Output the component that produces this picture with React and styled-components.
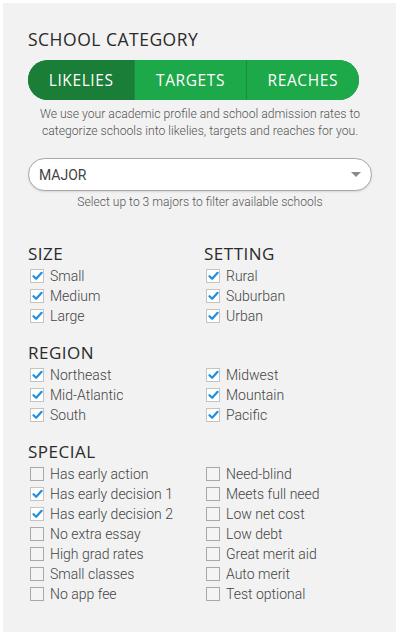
import React from "react";
import styled, { createGlobalStyle } from "styled-components";

const Global = createGlobalStyle`
  html, body { margin: 0; padding: 0; background: #fff; }
  body { font-family: Roboto, "Liberation Sans", sans-serif; }
`;

const Page = styled.div`
  padding: 3px 4px 4px 3px;
`;

const Panel = styled.div`
  width: 393px;
  height: 629px;
  box-sizing: border-box;
  background: #f2f2f2;
  padding: 25px 24px 0 25px;
`;

const Heading = styled.h2`
  margin: 0 0 ${(p) => p.$mb || 0}px;
  font-family: "Open Sans", "Liberation Sans", sans-serif;
  font-weight: 400;
  font-size: ${(p) => p.$size || 17}px;
  line-height: ${(p) => p.$lh || 20}px;
  letter-spacing: 0.5px;
  color: #2a2a2a;
  text-transform: uppercase;
  min-height: ${(p) => p.$lh || 20}px;
`;

const Segmented = styled.div`
  display: flex;
  width: 331px;
  height: 40px;
  border-radius: 20px;
  overflow: hidden;
  background: #1da84a;
`;

const Segment = styled.button`
  flex: ${(p) => p.$w} 0 0;
  border: none;
  margin: 0;
  padding: 0;
  background: ${(p) => (p.$active ? "#1a7d38" : "#1da84a")};
  border-left: ${(p) => (p.$first ? "none" : "1px solid #178f3e")};
  color: #fff;
  font-family: "Open Sans", "Liberation Sans", sans-serif;
  font-size: 15.5px;
  letter-spacing: 0.6px;
  text-transform: uppercase;
`;

const Description = styled.p`
  margin: 6px 0 0;
  text-align: center;
  font-size: 12.2px;
  font-weight: 300;
  line-height: 17px;
  color: #555;
  white-space: nowrap;
`;

const SelectBox = styled.div`
  margin: 18px 0 0;
  height: 33px;
  box-sizing: border-box;
  border: 1px solid #a9a9a9;
  border-radius: 17px;
  background: #fff;
  display: flex;
  align-items: center;
  justify-content: space-between;
  padding: 0 10px 0 10px;
  font-size: 14px;
  color: #444;
  box-shadow: 0 1px 2px rgba(0, 0, 0, 0.12);
`;

const Hint = styled.p`
  margin: 3px 0 0;
  text-align: center;
  font-size: 12.1px;
  font-weight: 300;
  line-height: 17px;
  color: #555;
  white-space: nowrap;
`;

const Grid = styled.div`
  display: grid;
  grid-template-columns: 176px 1fr;
  margin-top: ${(p) => p.$mt}px;
`;

const Col = styled.div`
  display: flex;
  flex-direction: column;
`;

const Row = styled.label`
  display: flex;
  align-items: center;
  height: 20px;
  padding-left: 2px;
  gap: 6px;
  font-size: 14px;
  font-weight: 300;
  color: #444;
`;

const Box = styled.span`
  width: 14px;
  height: 14px;
  box-sizing: border-box;
  border: 1px solid ${(p) => (p.$checked ? "#c4c4c4" : "#a8a8a8")};
  background: ${(p) => (p.$checked ? "#fff" : "#f4f4f4")};
  display: flex;
  align-items: center;
  justify-content: center;
  flex: none;
`;

const Caret = styled.span`
  width: 0;
  height: 0;
  border-left: 5px solid transparent;
  border-right: 5px solid transparent;
  border-top: 5px solid #8a8a8a;
`;

function Check({ label, checked }) {
  return (
    <Row>
      <Box $checked={checked}>
        {checked && (
          <svg width="11" height="10" viewBox="0 0 11 10">
            <path d="M1.5 5.2 L4.2 7.8 L9.6 1.8" fill="none" stroke="#1d8fe6" strokeWidth="2.2" strokeLinecap="round" strokeLinejoin="round" />
          </svg>
        )}
      </Box>
      {label}
    </Row>
  );
}

function Section({ mt, left, right }) {
  return (
    <Grid $mt={mt}>
      {[left, right].map((c, i) => (
        <Col key={i}>
          <Heading $mb={2} $size={17}>{c.title}</Heading>
          {c.items.map(([l, ch]) => (
            <Check key={l} label={l} checked={ch} />
          ))}
        </Col>
      ))}
    </Grid>
  );
}

export default function App() {
  return (
    <Page>
      <Global />
      <Panel>
        <Heading $mb={10} $size={17.5} $lh={22}>School Category</Heading>
        <Segmented>
          <Segment $w={107} $first $active>Likelies</Segment>
          <Segment $w={111}>Targets</Segment>
          <Segment $w={113}>Reaches</Segment>
        </Segmented>
        <Description>
          We use your academic profile and school admission rates to
          <br />
          categorize schools into likelies, targets and reaches for you.
        </Description>
        <SelectBox>
          <span>MAJOR</span>
          <Caret />
        </SelectBox>
        <Hint>Select up to 3 majors to filter available schools</Hint>
        <Section
          mt={33}
          left={{ title: "Size", items: [["Small", true], ["Medium", true], ["Large", true]] }}
          right={{ title: "Setting", items: [["Rural", true], ["Suburban", true], ["Urban", true]] }}
        />
        <Section
          mt={17}
          left={{ title: "Region", items: [["Northeast", true], ["Mid-Atlantic", true], ["South", true]] }}
          right={{ title: "", items: [["Midwest", true], ["Mountain", true], ["Pacific", true]] }}
        />
        <Section
          mt={17}
          left={{
            title: "Special",
            items: [
              ["Has early action", false],
              ["Has early decision 1", true],
              ["Has early decision 2", true],
              ["No extra essay", false],
              ["High grad rates", false],
              ["Small classes", false],
              ["No app fee", false],
            ],
          }}
          right={{
            title: "",
            items: [
              ["Need-blind", false],
              ["Meets full need", false],
              ["Low net cost", false],
              ["Low debt", false],
              ["Great merit aid", false],
              ["Auto merit", false],
              ["Test optional", false],
            ],
          }}
        />
      </Panel>
    </Page>
  );
}
